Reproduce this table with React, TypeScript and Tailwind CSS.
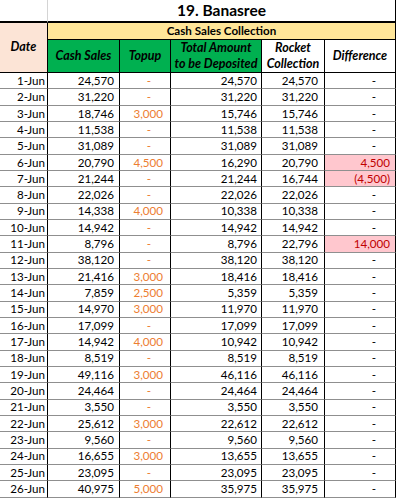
import React from "react";

type Row = [string, string, string, string, string, string, boolean?];

const rows: Row[] = [
  ["1-Jun", "24,570", "-", "24,570", "24,570", "-"],
  ["2-Jun", "31,220", "-", "31,220", "31,220", "-"],
  ["3-Jun", "18,746", "3,000", "15,746", "15,746", "-"],
  ["4-Jun", "11,538", "-", "11,538", "11,538", "-"],
  ["5-Jun", "31,089", "-", "31,089", "31,089", "-"],
  ["6-Jun", "20,790", "4,500", "16,290", "20,790", "4,500", true],
  ["7-Jun", "21,244", "-", "21,244", "16,744", "(4,500)", true],
  ["8-Jun", "22,026", "-", "22,026", "22,026", "-"],
  ["9-Jun", "14,338", "4,000", "10,338", "10,338", "-"],
  ["10-Jun", "14,942", "-", "14,942", "14,942", "-"],
  ["11-Jun", "8,796", "-", "8,796", "22,796", "14,000", true],
  ["12-Jun", "38,120", "-", "38,120", "38,120", "-"],
  ["13-Jun", "21,416", "3,000", "18,416", "18,416", "-"],
  ["14-Jun", "7,859", "2,500", "5,359", "5,359", "-"],
  ["15-Jun", "14,970", "3,000", "11,970", "11,970", "-"],
  ["16-Jun", "17,099", "-", "17,099", "17,099", "-"],
  ["17-Jun", "14,942", "4,000", "10,942", "10,942", "-"],
  ["18-Jun", "8,519", "-", "8,519", "8,519", "-"],
  ["19-Jun", "49,116", "3,000", "46,116", "46,116", "-"],
  ["20-Jun", "24,464", "-", "24,464", "24,464", "-"],
  ["21-Jun", "3,550", "-", "3,550", "3,550", "-"],
  ["22-Jun", "25,612", "3,000", "22,612", "22,612", "-"],
  ["23-Jun", "9,560", "-", "9,560", "9,560", "-"],
  ["24-Jun", "16,655", "3,000", "13,655", "13,655", "-"],
  ["25-Jun", "23,095", "-", "23,095", "23,095", "-"],
  ["26-Jun", "40,975", "5,000", "35,975", "35,975", "-"],
];

const cell =
  "h-[16.33px] flex items-center justify-end border-r border-b border-r-black border-b-[#8f8f8f] leading-none";

const head =
  "h-[33px] border-r border-b border-black flex items-center justify-center text-center font-bold italic text-[12.5px] leading-[16px]";

export default function App() {
  return (
    <div
      className="w-[396px] h-[500px] overflow-hidden bg-white text-black text-[11.6px]"
      style={{ fontFamily: "Lato, 'Open Sans', sans-serif" }}
    >
      <div className="grid grid-cols-[48px_72px_51px_91px_63px_71px]">
        {/* title row */}
        <div className="h-[23px] border-r border-r-[#d4d4d4] border-b-2 border-b-black" />
        <div className="col-span-5 h-[23px] border-r border-r-black border-b-2 border-b-black flex items-center justify-center font-bold text-[15.5px] leading-none">
          19. Banasree
        </div>

        {/* date header */}
        <div className="row-span-2 bg-[#FCE4D6] border-r border-b border-black flex items-center justify-center font-bold italic text-[12.5px]">
          Date
        </div>
        <div className="col-span-5 h-[17px] bg-[#FFE699] border-r border-b border-black flex items-center justify-center font-bold leading-none">
          Cash Sales Collection
        </div>

        {/* column headers */}
        <div className={`${head} bg-[#00B050]`}>Cash Sales</div>
        <div className={`${head} bg-[#00B050]`}>Topup</div>
        <div className={`${head} bg-[#00B050]`}>
          Total Amount
          <br />
          to be Deposited
        </div>
        <div className={`${head} bg-white`}>
          Rocket
          <br />
          Collection
        </div>
        <div className={`${head} bg-white`}>Difference</div>

        {rows.map((r) => {
          const [d, cs, tu, tot, rk, diff, bad] = r;
          return (
            <React.Fragment key={d}>
              <div className={`${cell} pr-[2px]`}>{d}</div>
              <div className={`${cell} pr-[5px]`}>{cs}</div>
              <div
                className={`${cell} text-[#ED7D31] ${tu === "-" ? "pr-[19px]" : "pr-[7px]"}`}
              >
                {tu}
              </div>
              <div className={`${cell} pr-[4px]`}>{tot}</div>
              <div className={`${cell} pr-[6px]`}>{rk}</div>
              <div
                className={`${cell} ${bad ? "bg-[#FFC7CE] text-[#c00000] pr-[5px]" : "pr-[19px]"}`}
              >
                {diff}
              </div>
            </React.Fragment>
          );
        })}
      </div>
    </div>
  );
}
